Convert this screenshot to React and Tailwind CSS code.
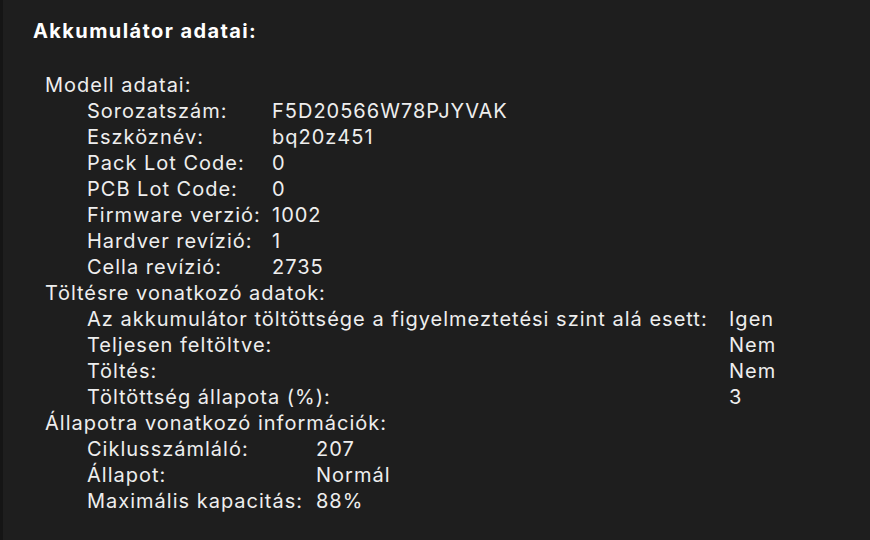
const model = [
  ['Sorozatszám:', 'F5D20566W78PJYVAK'],
  ['Eszköznév:', 'bq20z451'],
  ['Pack Lot Code:', '0'],
  ['PCB Lot Code:', '0'],
  ['Firmware verzió:', '1002'],
  ['Hardver revízió:', '1'],
  ['Cella revízió:', '2735'],
];

const charging = [
  ['Az akkumulátor töltöttsége a figyelmeztetési szint alá esett:', 'Igen'],
  ['Teljesen feltöltve:', 'Nem'],
  ['Töltés:', 'Nem'],
  ['Töltöttség állapota (%):', '3'],
];

const health = [
  ['Ciklusszámláló:', '207'],
  ['Állapot:', 'Normál'],
  ['Maximális kapacitás:', '88%'],
];

function Section({ title, rows, cols }) {
  return (
    <div>
      <div className="h-[26px] leading-[26px]">{title}</div>
      <div className={`grid ${cols} pl-[42px]`}>
        {rows.map(([k, v]) => (
          <div key={k} className="contents">
            <div className="h-[26px] leading-[26px] whitespace-nowrap">{k}</div>
            <div className="h-[26px] leading-[26px] whitespace-nowrap">{v}</div>
          </div>
        ))}
      </div>
    </div>
  );
}

export default function App() {
  return (
    <div className="w-[870px] h-[540px] bg-[#1e1e1e] border-l-[3px] border-[#151515] text-[#eeeeee] font-['Inter','Liberation_Sans',sans-serif] overflow-hidden">
      <div className="pl-[30px] pt-[18px]">
        <h1 className="text-[20px] font-bold text-white leading-[26px] tracking-[1.4px]">Akkumulátor adatai:</h1>
      </div>
      <div className="pl-[42px] pt-[28px] text-[20px] tracking-[1px]">
        <Section title="Modell adatai:" rows={model} cols="grid-cols-[185px_auto]" />
        <Section title="Töltésre vonatkozó adatok:" rows={charging} cols="grid-cols-[642px_auto]" />
        <Section title="Állapotra vonatkozó információk:" rows={health} cols="grid-cols-[229px_auto]" />
      </div>
    </div>
  );
}
